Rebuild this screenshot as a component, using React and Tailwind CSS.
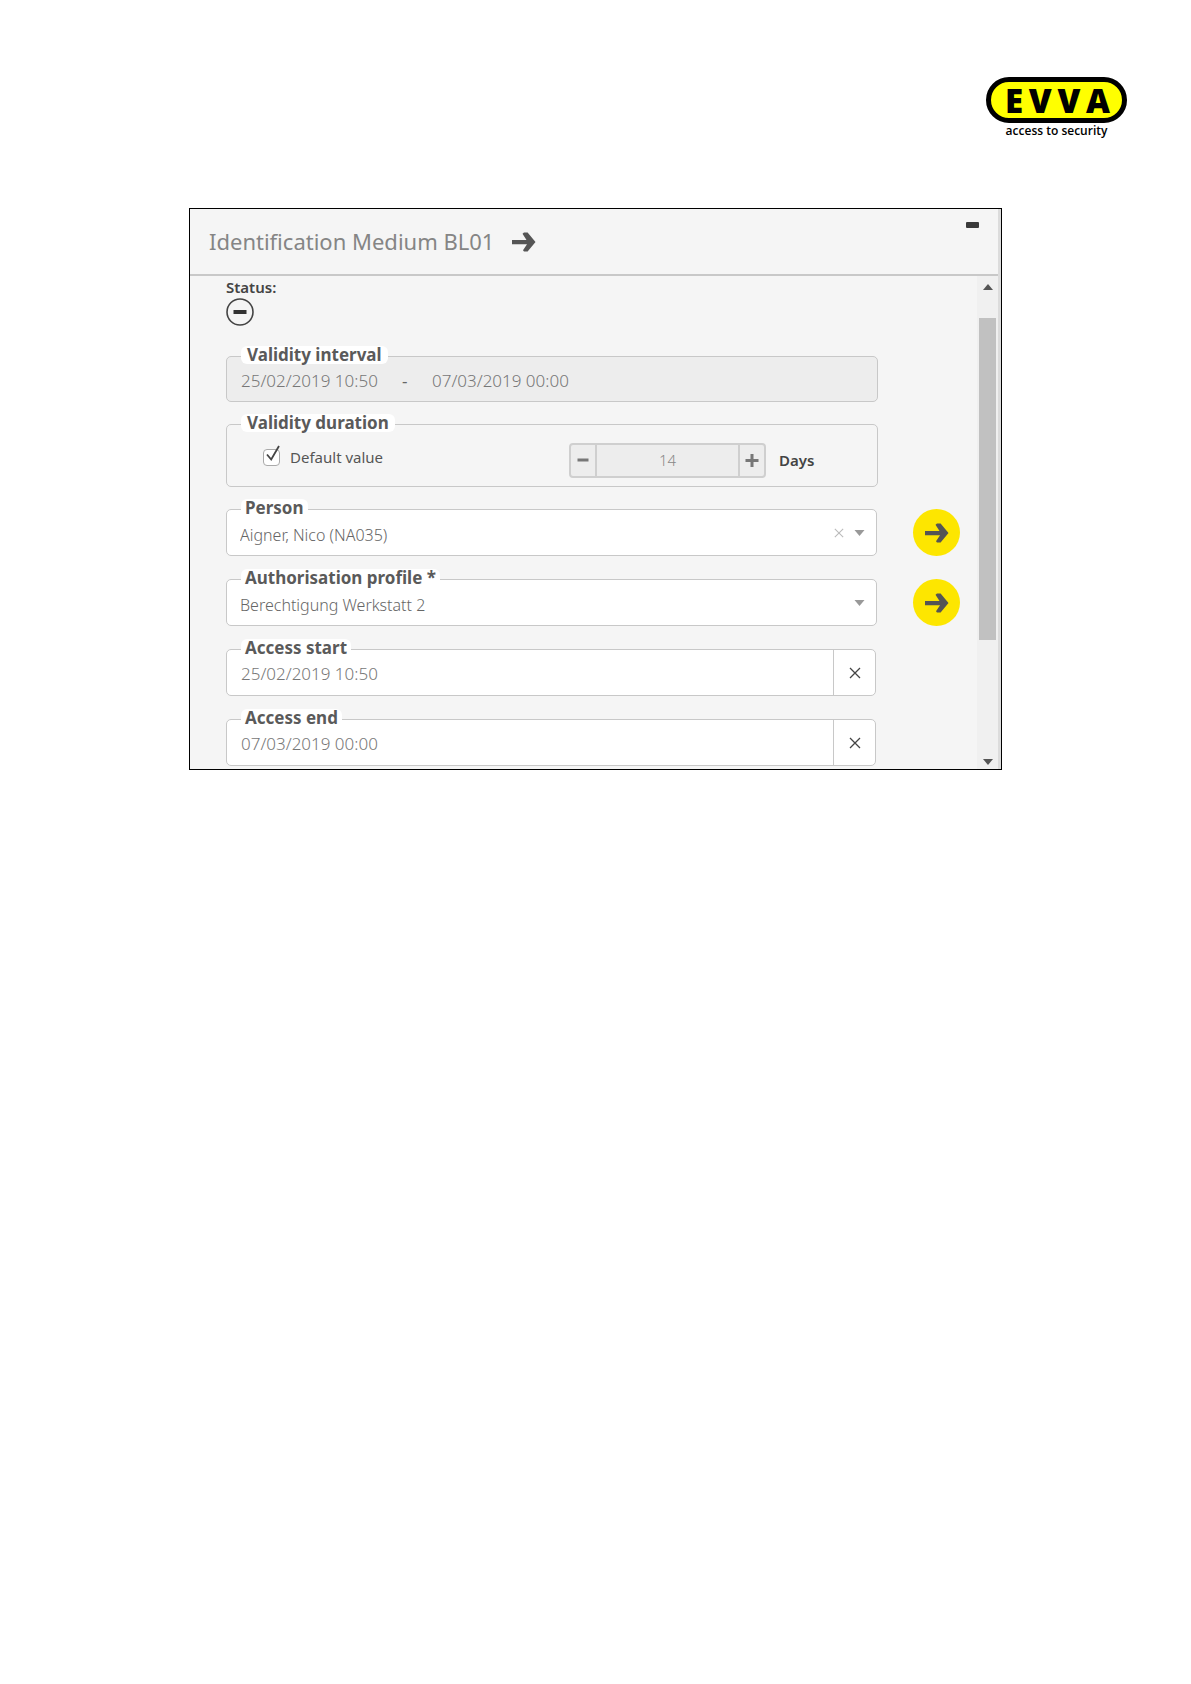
import React from "react";

const legendClass =
  "absolute left-[14px] rounded-md bg-white font-bold leading-[18px] text-[17px] text-[#5a5a5a] whitespace-nowrap";

function ArrowIcon({ className }) {
  return (
    <svg viewBox="0 0 24 20" className={className} aria-hidden="true">
      <path d="M0 8h14.5L10.5 1.8 12 0.6h3.6L23.5 10l-7.9 9.4H12l-1-1.2 4-6H0z" fill="currentColor" />
    </svg>
  );
}

function CrossIcon({ className }) {
  return (
    <svg viewBox="0 0 12 12" className={className} aria-hidden="true">
      <path d="M1 1l10 10M11 1L1 11" stroke="currentColor" strokeWidth="1.3" fill="none" />
    </svg>
  );
}

function Triangle({ className }) {
  return (
    <svg viewBox="0 0 10 6" className={className} aria-hidden="true">
      <path d="M0 0h10L5 6z" fill="currentColor" />
    </svg>
  );
}

function Logo() {
  return (
    <div className="w-[141px]">
      <div className="flex h-[46px] items-center justify-between rounded-full border-[5px] border-black bg-[#ffff00] pr-3 pl-[14px] font-['Noto_Sans',sans-serif] text-[33px] font-black leading-none text-black">
        <span>E</span>
        <span>V</span>
        <span>V</span>
        <span>A</span>
      </div>
      <p className="text-center font-['Open_Sans',sans-serif] text-[12px] font-semibold leading-4 text-black">
        access to security
      </p>
    </div>
  );
}

function SelectRow({ id, label, value, clearable }) {
  return (
    <div className="flex items-center">
      <div className="relative mr-px flex h-[47px] min-w-0 flex-1 items-center rounded-[5px] border border-[#c8c8c8] bg-white">
        <label htmlFor={id} className={`${legendClass} -top-[11px] px-1`}>
          {label}
        </label>
        <select
          id={id}
          defaultValue={value}
          className="h-full w-full appearance-none bg-transparent pt-1 pl-[13px] text-[16px] font-light text-[#666] outline-none"
        >
          <option>{value}</option>
        </select>
        <div className="pointer-events-none absolute right-[11px] flex items-center gap-[10px]">
          {clearable && (
            <button type="button" aria-label="Clear" className="pointer-events-auto text-[#bbb]">
              <CrossIcon className="size-[10px]" />
            </button>
          )}
          <Triangle className="h-[6px] w-[11px] text-[#999]" />
        </div>
      </div>
      <button
        type="button"
        aria-label={`Open ${label}`}
        className="ml-[35px] flex size-[47px] items-center justify-center rounded-full bg-[#fde600] text-[#555]"
      >
        <ArrowIcon className="h-[20px] w-[24px]" />
      </button>
    </div>
  );
}

function DateRow({ id, label, value }) {
  return (
    <div className="relative mr-[84px] flex h-[47px] rounded-[5px] border border-[#c8c8c8] bg-white">
      <label htmlFor={id} className={`${legendClass} -top-[11px] px-1`}>
        {label}
      </label>
      <input
        id={id}
        defaultValue={value}
        className="min-w-0 flex-1 bg-transparent pt-[2px] pl-[14px] text-[17px] font-light text-[#777] outline-none"
      />
      <button
        type="button"
        aria-label={`Clear ${label}`}
        className="flex w-[42px] items-center justify-center border-l border-[#c8c8c8] text-[#444]"
      >
        <CrossIcon className="size-3" />
      </button>
    </div>
  );
}

export default function App() {
  return (
    <main className="min-h-screen bg-white font-['Noto_Sans',sans-serif]">
      <header className="flex justify-end pt-[77px] pr-16">
        <Logo />
      </header>

      <section className="mx-[189px] mt-[69px] flex overflow-hidden border border-black bg-[#f5f5f5]">
        <div className="min-w-0 flex-1">
          <div className="flex h-[67px] items-center justify-between border-b-2 border-[#c8c8c8] pl-[19px]">
            <h1 className="flex items-center gap-[18px] text-[22px] text-[#858585]">
              Identification Medium BL01
              <ArrowIcon className="h-[20px] w-[24px] text-[#555]" />
            </h1>
            <button type="button" aria-label="Minimise" className="mr-[19px] flex h-8 items-center self-start">
              <span className="block h-[6px] w-[13px] rounded-[1px] bg-[#3a3a3a]" />
            </button>
          </div>

          <div className="flex">
            <div className="min-w-0 flex-1 pr-[17px] pb-[3px] pl-9">
              <p className="text-[15px] font-semibold leading-[22px] text-[#444]">Status:</p>
              <svg viewBox="0 0 28 28" className="size-7" role="img" aria-label="Inactive">
                <circle cx="14" cy="14" r="13" fill="none" stroke="#444" strokeWidth="1.6" />
                <rect x="7.5" y="12" width="13" height="4" fill="#333" />
              </svg>

              <form className="mt-[30px]">
                <div className="relative mr-[82px] flex h-[46px] items-center rounded-[5px] border border-[#c8c8c8] bg-[#ededed]">
                  <label htmlFor="from" className={`${legendClass} -top-[11px] px-[6px]`}>
                    Validity interval
                  </label>
                  <input
                    id="from"
                    readOnly
                    defaultValue="25/02/2019 10:50"
                    className="w-[175px] bg-transparent pt-1 pl-[14px] text-[17px] font-light text-[#777] outline-none"
                  />
                  <span className="w-[30px] pt-1 text-[17px] text-[#666]">-</span>
                  <input
                    aria-label="Validity interval end"
                    readOnly
                    defaultValue="07/03/2019 00:00"
                    className="w-[176px] bg-transparent pt-1 text-[17px] font-light text-[#777] outline-none"
                  />
                </div>

                <div className="relative mt-[22px] mr-[82px] flex h-[63px] items-center rounded-[5px] border border-[#c8c8c8]">
                  <span className={`${legendClass} -top-[11px] px-[6px]`}>Validity duration</span>
                  <label className="relative flex flex-1 items-center gap-[10px] pt-1 pl-9 text-[15px] text-[#555]">
                    <input
                      type="checkbox"
                      defaultChecked
                      className="size-[17px] appearance-none rounded-[4px] border border-[#aaa] bg-white"
                    />
                    <svg viewBox="0 0 16 18" className="absolute top-[2px] left-[38px] h-[18px] w-4" aria-hidden="true">
                      <path d="M2 10.5l4.2 5L14 2" fill="none" stroke="#444" strokeWidth="1.8" />
                    </svg>
                    Default value
                  </label>
                  <div className="mt-[10px] flex h-[35px] w-[197px] rounded-[4px] border-2 border-[#cfcfcf] bg-[#ededed]">
                    <button type="button" aria-label="Decrease" className="flex w-[26px] items-center justify-center border-r-2 border-[#cfcfcf] text-[#777]">
                      <svg viewBox="0 0 12 12" className="size-3" aria-hidden="true">
                        <path d="M0.5 5h11" stroke="currentColor" strokeWidth="3" />
                      </svg>
                    </button>
                    <input
                      aria-label="Duration in days"
                      defaultValue="14"
                      className="min-w-0 flex-1 bg-transparent text-center text-[15px] font-light text-[#888] outline-none"
                    />
                    <button type="button" aria-label="Increase" className="flex w-[26px] items-center justify-center border-l-2 border-[#cfcfcf] text-[#777]">
                      <svg viewBox="0 0 14 14" className="size-[14px]" aria-hidden="true">
                        <path d="M0.5 6.5h13M7 0v13" stroke="currentColor" strokeWidth="3" />
                      </svg>
                    </button>
                  </div>
                  <span className="w-[111px] pt-[10px] pl-[13px] text-[15px] font-semibold text-[#444]">Days</span>
                </div>

                <div className="mt-[22px] flex flex-col gap-[23px]">
                  <SelectRow id="person" label="Person" value="Aigner, Nico (NA035)" clearable />
                  <SelectRow id="profile" label="Authorisation profile *" value="Berechtigung Werkstatt 2" />
                  <DateRow id="start" label="Access start" value="25/02/2019 10:50" />
                  <DateRow id="end" label="Access end" value="07/03/2019 00:00" />
                </div>
              </form>
            </div>

            <div className="flex w-[21px] flex-col items-center justify-between bg-[#f0f0f0] pt-2 pb-1" aria-hidden="true">
              <Triangle className="h-[6px] w-[10px] rotate-180 text-[#555]" />
              <div className="mt-7 mb-auto h-[322px] w-[17px] bg-[#c1c1c1]" />
              <Triangle className="h-[6px] w-[10px] text-[#555]" />
            </div>
          </div>
        </div>
        <div className="w-[3px] bg-[#dcdcdc]" />
      </section>
    </main>
  );
}
